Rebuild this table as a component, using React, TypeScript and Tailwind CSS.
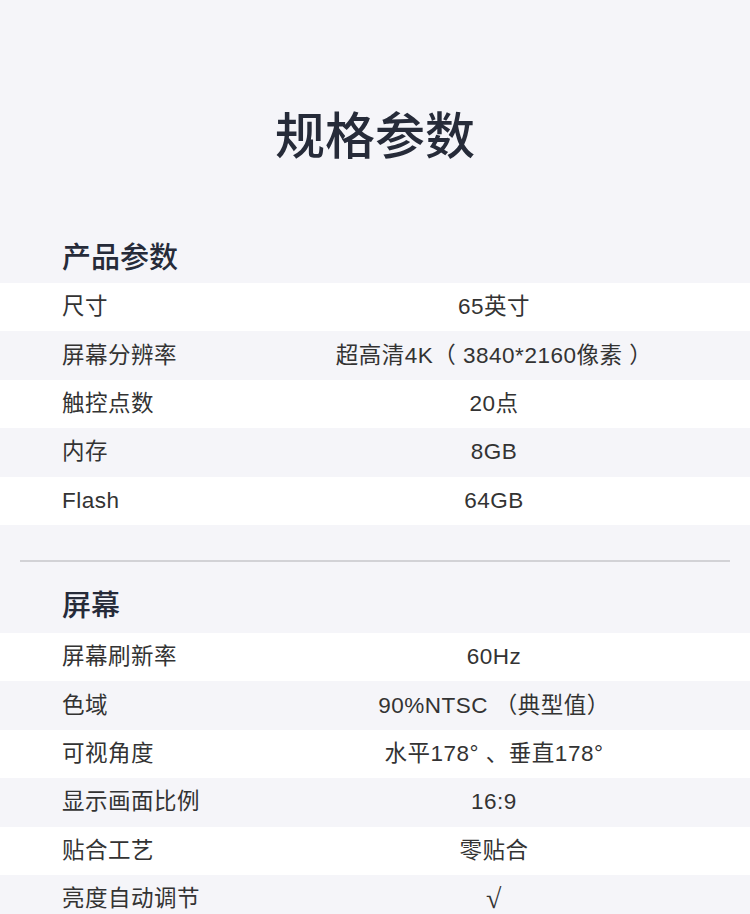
import React from 'react';

type Spec = { label: string; value: string };

const sections: { title: string; items: Spec[] }[] = [
  {
    title: '产品参数',
    items: [
      { label: '尺寸', value: '65英寸' },
      { label: '屏幕分辨率', value: '超高清4K（ 3840*2160像素 ）' },
      { label: '触控点数', value: '20点' },
      { label: '内存', value: '8GB' },
      { label: 'Flash', value: '64GB' },
    ],
  },
  {
    title: '屏幕',
    items: [
      { label: '屏幕刷新率', value: '60Hz' },
      { label: '色域', value: '90%NTSC （典型值）' },
      { label: '可视角度', value: '水平178° 、垂直178°' },
      { label: '显示画面比例', value: '16:9' },
      { label: '贴合工艺', value: '零贴合' },
      { label: '亮度自动调节', value: '√' },
    ],
  },
];

const SpecRow = ({ item, index }: { item: Spec; index: number }) => (
  <div
    className={`flex h-[48.4px] items-center text-[22.5px] tracking-[0.5px] text-[#333333] ${
      index % 2 === 0 ? 'bg-white' : 'bg-[#f5f5f9]'
    }`}
  >
    <div className="w-[238px] pl-[62px]">{item.label}</div>
    {item.value === '√' ? (
      <div
        className="flex-1 text-center text-[28px] leading-[30px]"
        style={{ fontFamily: '"Liberation Serif", serif' }}
      >
        √
      </div>
    ) : (
      <div className="flex-1 text-center">{item.value}</div>
    )}
  </div>
);

export default function App() {
  return (
    <div
      className="min-h-[914px] w-[750px] overflow-hidden bg-[#f5f5f9]"
      style={{ fontFamily: '"Liberation Sans", "Noto Sans CJK SC", sans-serif' }}
    >
      <h1 className="pt-[106px] text-center text-[50px] font-medium leading-[62px] text-[#262b39]">
        规格参数
      </h1>

      {sections.map((section, si) => (
        <section key={section.title}>
          {si > 0 && <div className="mx-[20px] mt-[35px] h-[2px] bg-[#d2d2d6]" />}
          <h2
            className={`pl-[62px] text-[29px] font-medium leading-[40px] text-[#262b39] ${
              si === 0 ? 'mt-[70px] mb-[5px]' : 'mt-[24px] mb-[7px]'
            }`}
          >
            {section.title}
          </h2>
          {section.items.map((item, i) => (
            <SpecRow key={item.label} item={item} index={i} />
          ))}
        </section>
      ))}
    </div>
  );
}
